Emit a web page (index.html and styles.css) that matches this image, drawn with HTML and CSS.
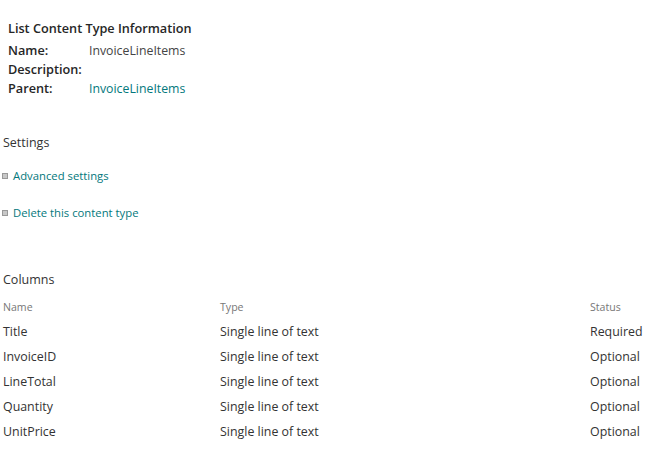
FILE: index.html
```html
<!DOCTYPE html>
<html>
<head>
<meta charset="utf-8">
<link rel="stylesheet" href="styles.css">
</head>
<body>
<div class="page">
  <section class="info">
    <h2 class="info-title">List Content Type Information</h2>
    <div class="info-grid">
      <div class="info-label">Name:</div><div class="info-value">InvoiceLineItems</div>
      <div class="info-label">Description:</div><div class="info-value"></div>
      <div class="info-label">Parent:</div><div class="info-value"><a class="link" href="#">InvoiceLineItems</a></div>
    </div>
  </section>

  <section class="settings">
    <h3 class="section-title">Settings</h3>
    <ul class="settings-list">
      <li class="settings-item"><span class="bullet"></span><a class="link" href="#">Advanced settings</a></li>
      <li class="settings-item"><span class="bullet"></span><a class="link" href="#">Delete this content type</a></li>
    </ul>
  </section>

  <section class="columns">
    <h3 class="section-title">Columns</h3>
    <div class="col-table">
      <div class="col-row col-head"><span>Name</span><span>Type</span><span>Status</span></div>
      <div class="col-row"><span>Title</span><span>Single line of text</span><span>Required</span></div>
      <div class="col-row"><span>InvoiceID</span><span>Single line of text</span><span>Optional</span></div>
      <div class="col-row"><span>LineTotal</span><span>Single line of text</span><span>Optional</span></div>
      <div class="col-row"><span>Quantity</span><span>Single line of text</span><span>Optional</span></div>
      <div class="col-row"><span>UnitPrice</span><span>Single line of text</span><span>Optional</span></div>
    </div>
  </section>
</div>
</body>
</html>
```

FILE: styles.css
```css
html, body {
  margin: 0;
  padding: 0;
  background: #ffffff;
}
body {
  font-family: "Open Sans", "Noto Sans", sans-serif;
  font-size: 12.7px;
  color: #333333;
}
.page {
  padding: 0 0 0 3px;
}
.info {
  padding: 19px 0 0 5px;
}
.info-title {
  margin: 0 0 3px 0;
  font-size: 12.7px;
  font-weight: 600;
  line-height: 19px;
  color: #262626;
}
.info-grid {
  display: grid;
  grid-template-columns: 81px 1fr;
  grid-auto-rows: 19px;
  line-height: 19px;
}
.info-label {
  font-weight: 600;
  color: #262626;
}
.info-value {
  color: #444;
  font-size: 12.3px;
}
.link {
  color: #03787c;
  text-decoration: none;
}
.settings {
  margin-top: 35px;
}
.section-title {
  margin: 0;
  font-size: 12.5px;
  font-weight: 400;
  line-height: 19px;
  color: #333;
}
.settings-list {
  list-style: none;
  margin: 14px 0 0 0;
  padding: 0;
  font-size: 11.3px;
}
.settings-item {
  display: flex;
  align-items: center;
  gap: 5px;
  height: 19px;
  margin-bottom: 18px;
}
.bullet {
  width: 6px;
  height: 6px;
  background: #c8c8c8;
  border: 1px solid #999;
  box-sizing: border-box;
  margin-left: -1px;
}
.columns {
  margin-top: 48px;
}
.col-table {
  margin-top: 8px;
}
.col-row {
  display: grid;
  grid-template-columns: 217px 370px 1fr;
  height: 25px;
  line-height: 25px;
  font-size: 12.4px;
  color: #333;
}
.col-head {
  font-size: 10.6px;
  color: #777;
  height: 20px;
  line-height: 20px;
  margin-bottom: 2px;
}
```
